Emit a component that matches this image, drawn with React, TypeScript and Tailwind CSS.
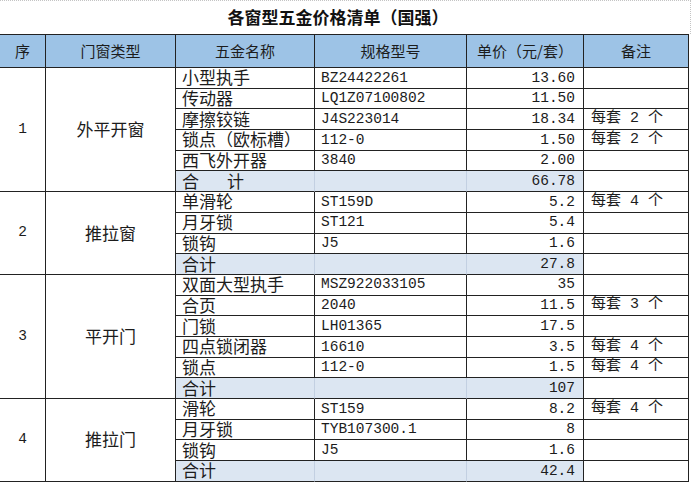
import React from "react";

type Item = { name: string; code: string; price: string; note?: string };
type Group = { no: string; type: string; items: Item[]; total: string; spaced?: boolean };

const groups: Group[] = [
  {
    no: "1",
    type: "外平开窗",
    spaced: true,
    items: [
      { name: "小型执手", code: "BZ24422261", price: "13.60" },
      { name: "传动器", code: "LQ1Z07100802", price: "11.50" },
      { name: "摩擦铰链", code: "J4S223014", price: "18.34", note: "每套 2 个" },
      { name: "锁点（欧标槽）", code: "112-0", price: "1.50", note: "每套 2 个" },
      { name: "西飞外开器", code: "3840", price: "2.00" },
    ],
    total: "66.78",
  },
  {
    no: "2",
    type: "推拉窗",
    items: [
      { name: "单滑轮", code: "ST159D", price: "5.2", note: "每套 4 个" },
      { name: "月牙锁", code: "ST121", price: "5.4" },
      { name: "锁钩", code: "J5", price: "1.6" },
    ],
    total: "27.8",
  },
  {
    no: "3",
    type: "平开门",
    items: [
      { name: "双面大型执手", code: "MSZ922033105", price: "35" },
      { name: "合页", code: "2040", price: "11.5", note: "每套 3 个" },
      { name: "门锁", code: "LH01365", price: "17.5" },
      { name: "四点锁闭器", code: "16610", price: "3.5", note: "每套 4 个" },
      { name: "锁点", code: "112-0", price: "1.5", note: "每套 4 个" },
    ],
    total: "107",
  },
  {
    no: "4",
    type: "推拉门",
    items: [
      { name: "滑轮", code: "ST159", price: "8.2", note: "每套 4 个" },
      { name: "月牙锁", code: "TYB107300.1", price: "8" },
      { name: "锁钩", code: "J5", price: "1.6" },
    ],
    total: "42.4",
  },
];

const cell = "border-r border-b border-[#222] flex items-center whitespace-nowrap";
const headers = ["序", "门窗类型", "五金名称", "规格型号", "单价（元/套）", "备注"];

export default function App() {
  return (
    <div className="w-[695px] h-[483px] bg-white text-[#1c1c1c] font-['Liberation_Mono','Noto_Sans_CJK_SC',monospace]">
      <div className="w-[691px] h-[34px] border-t border-r border-dotted border-[#c4c4c4] flex items-center justify-center pr-[14px] pb-[3px] font-['Noto_Sans_CJK_SC',sans-serif] font-bold text-[17px] leading-none text-[#111]">
        各窗型五金价格清单（国强）
      </div>
      <div className="w-[689px] grid grid-cols-[46px_130px_139px_152px_117px_105px] grid-rows-[33px_repeat(20,20.7px)] border-t border-[#222]">
        {headers.map((h) => (
          <div
            key={h}
            className={`${cell} justify-center bg-[#9dc3e6] pb-[2px] font-['Noto_Sans_CJK_SC',sans-serif] text-[15px] leading-none`}
          >
            {h}
          </div>
        ))}
        {groups.map((g) => (
          <React.Fragment key={g.no}>
            <div
              className={`${cell} justify-center text-[14.5px] ${g.items.length === 5 ? "row-span-6" : "row-span-4"}`}
            >
              {g.no}
            </div>
            <div
              className={`${cell} justify-center pb-[2px] font-['Noto_Sans_CJK_SC',sans-serif] text-[17px] leading-none ${g.items.length === 5 ? "row-span-6" : "row-span-4"}`}
            >
              {g.type}
            </div>
            {g.items.map((it, i) => (
              <React.Fragment key={i}>
                <div className={`${cell} pl-[6px] pb-[2px] font-['Noto_Sans_CJK_SC',sans-serif] text-[17px] leading-none`}>
                  {it.name}
                </div>
                <div className={`${cell} pl-[6px] text-[14.5px] leading-none`}>{it.code}</div>
                <div className={`${cell} justify-end pr-[8px] text-[14.5px] leading-none`}>{it.price}</div>
                <div className={`${cell} pl-[7px] pb-[1px] text-[15px] leading-none`}>{it.note ?? ""}</div>
              </React.Fragment>
            ))}
            <div
              className={`${cell} !border-r-[#c3d0e2] bg-[#dce6f2] pl-[6px] pb-[2px] font-['Noto_Sans_CJK_SC',sans-serif] text-[17px] leading-none ${g.spaced ? "gap-[28px]" : ""}`}
            >
              <span>合</span>
              <span>计</span>
            </div>
            <div className={`${cell} !border-r-[#c3d0e2] bg-[#dce6f2]`} />
            <div className={`${cell} justify-end pr-[8px] bg-[#dce6f2] text-[14.5px] leading-none`}>{g.total}</div>
            <div className={cell} />
          </React.Fragment>
        ))}
      </div>
    </div>
  );
}
